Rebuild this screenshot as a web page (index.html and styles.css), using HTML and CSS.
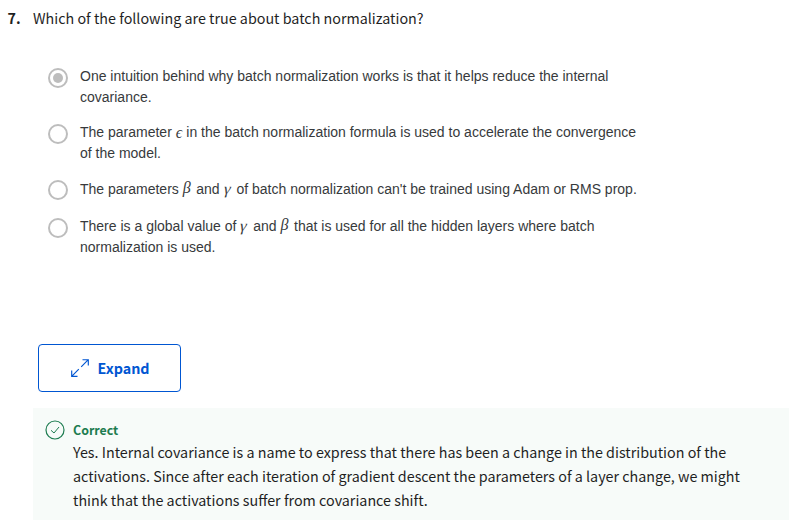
FILE: index.html
```html
<!DOCTYPE html>
<html lang="en">
<head>
<meta charset="utf-8">
<title>Quiz</title>
<link rel="stylesheet" href="styles.css">
</head>
<body>
<main class="quiz">
  <header class="question"><span class="number">7.</span><span class="prompt">Which of the following are true about batch normalization?</span></header>
  <ul class="options">
    <li class="option"><span class="radio selected"></span><p>One intuition behind why batch normalization works is that it helps reduce the internal<br>covariance.</p></li>
    <li class="option"><span class="radio"></span><p>The parameter <i class="math epsilon">ϵ</i> in the batch normalization formula is used to accelerate the convergence<br>of the model.</p></li>
    <li class="option math-option"><span class="radio"></span><p>The parameters <i class="math beta">β</i> and <i class="math gamma">γ</i> of batch normalization can't be trained using Adam or RMS prop.</p></li>
    <li class="option"><span class="radio"></span><p>There is a global value of <i class="math gamma">γ</i> and <i class="math beta">β</i> that is used for all the hidden layers where batch<br>normalization is used.</p></li>
  </ul>
  <button class="expand">
    <svg width="18" height="18" viewBox="0 0 18 18" fill="none" stroke="currentColor"><path d="M.7 17.3 7.8 10.2M10.2 7.8 17.3.7M11.5.7H17.3V6.5M.7 11.5V17.3H6.5"/></svg>
    <span>Expand</span>
  </button>
  <section class="feedback">
    <svg width="20" height="20" viewBox="0 0 20 20" fill="none" stroke="currentColor"><circle cx="10" cy="10" r="9" stroke-width="1.2"/><path d="M6 10.3 9 13 14 7"/></svg>
    <div>
      <h2>Correct</h2>
      <p>Yes. Internal covariance is a name to express that there has been a change in the distribution of the<br>activations. Since after each iteration of gradient descent the parameters of a layer change, we might<br>think that the activations suffer from covariance shift.</p>
    </div>
  </section>
</main>
</body>
</html>
```
FILE: styles.css
```css
* { box-sizing: border-box; }
body { margin: 0; background: #fff; color: #1f1f1f; font-family: "Noto Sans CJK SC", sans-serif; font-size: 14.32px; overflow: hidden; }
p, h2, ul { margin: 0; padding: 0; }
.quiz { height: 520px; display: flex; flex-direction: column; align-items: flex-start; }
.question { display: flex; padding: 6px 0 0 7.5px; line-height: 24px; white-space: nowrap; }
.number { width: 25.5px; font-weight: 700; }
.options { list-style: none; margin: 36px 0 0 48px; display: flex; flex-direction: column; gap: 14px; }
.option { display: flex; gap: 12px; font: 14px/21px "Liberation Sans", sans-serif; color: #373a3c; white-space: nowrap; }
.math-option { padding: 1px 0 2px; }
.radio { width: 20px; height: 20px; flex: none; margin-top: 2px; border: 2px solid #bdbdbd; border-radius: 50%; }
.math-option .radio { margin-top: 1px; }
.selected { display: flex; align-items: center; justify-content: center; }
.selected::after { content: ""; width: 10px; height: 10px; border-radius: 50%; background: #bdbdbd; }
.math { display: inline-block; height: 20px; vertical-align: top; font-family: "Liberation Serif", serif; }
.epsilon { width: 6.7px; font-size: 16px; line-height: 22px; }
.beta { width: 9.7px; font-size: 16px; line-height: 17px; }
.gamma { width: 9px; font-style: normal; font-size: 16px; line-height: 20px; transform: skewX(-14deg); }
.expand { display: flex; align-items: center; justify-content: center; gap: 9px; width: 143px; height: 48px; margin: 86px 0 0 38px; padding: 0 0 0 1px; border: 1px solid #0056d2; border-radius: 4px; background: #fff; color: #0056d2; font: 700 14.3px/24px "Noto Sans CJK SC", sans-serif; }
.expand path { stroke-width: 1.15; stroke-dasharray: none; }
.feedback { display: flex; gap: 8px; width: 756px; height: 112px; margin: 16px 0 0 33px; padding: 12px; background: #f7fbf9; line-height: 24px; white-space: nowrap; }
.feedback > svg { flex: none; color: #1d7c50; }
.feedback h2 { font-size: 12.4px; line-height: 20px; color: #1d7c50; }
```
